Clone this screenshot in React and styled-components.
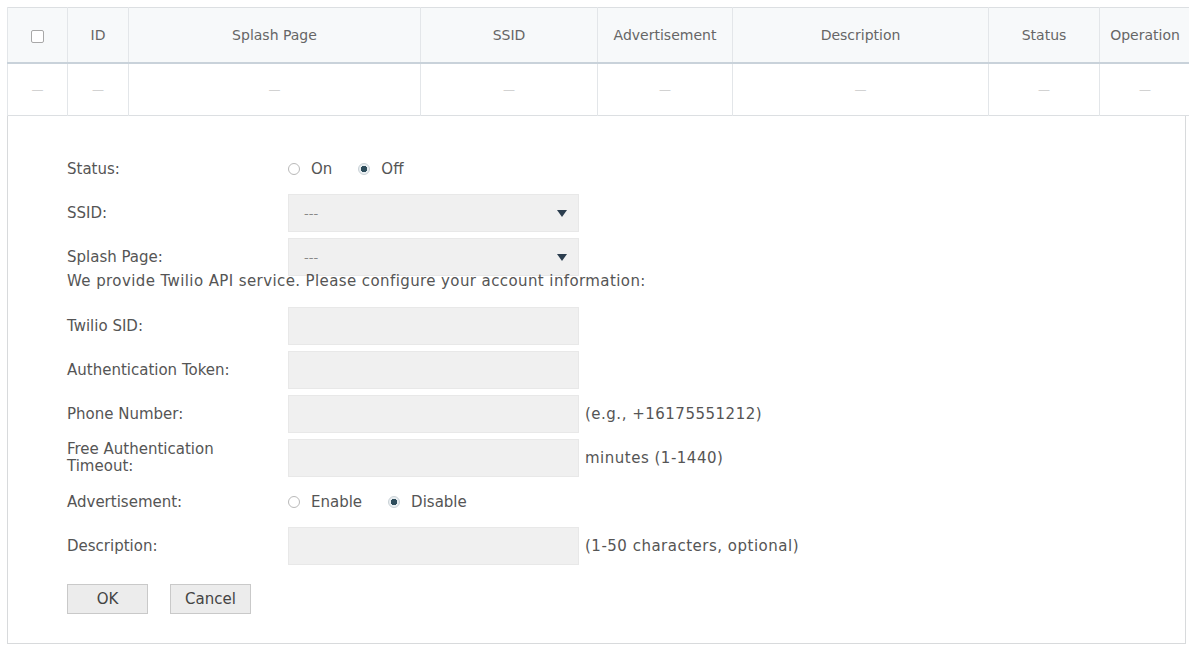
import React from 'react'
import styled, { createGlobalStyle } from 'styled-components'

const GlobalStyle = createGlobalStyle`
  html, body {
    margin: 0;
    padding: 0;
    background: #ffffff;
    overflow: hidden;
  }
  body {
    font-family: "DejaVu Sans", Verdana, sans-serif;
    font-size: 15px;
    color: #555;
  }
`

const Page = styled.div`
  padding: 7px 0 0 7px;
  width: 1189px;
  box-sizing: border-box;
`

const Grid = styled.table`
  width: 1183px;
  border-collapse: collapse;
  table-layout: fixed;
  border: 1px solid #dcdfe2;
`

const HeadCell = styled.th`
  height: 54px;
  padding: 0;
  background: #f7f9fa;
  border-left: 1px solid #e3e6e9;
  border-bottom: 2px solid #c9d2da;
  font-weight: normal;
  font-size: 14px;
  color: #666;
  text-align: center;
  white-space: nowrap;
`

const BodyCell = styled.td`
  height: 51px;
  padding: 0;
  border-left: 1px solid #e3e6e9;
  text-align: center;
  color: #d2d2d2;
  font-size: 12px;
`

const Check = styled.span`
  display: inline-block;
  width: 11px;
  height: 11px;
  border: 1px solid #a8a8a8;
  border-radius: 2px;
  background: #fff;
  vertical-align: middle;
`

const Panel = styled.div`
  width: 1179px;
  box-sizing: border-box;
  border: 1px solid #d8dadc;
  border-top: none;
  padding: 34px 0 29px 59px;
  display: flex;
  flex-direction: column;
`

const Field = styled.div`
  display: flex;
  align-items: center;
  height: 38px;
  margin-bottom: ${p => p.$after ?? 6}px;
`

const Label = styled.div`
  width: 221px;
  flex: none;
  color: #555;
  font-size: 15px;
  line-height: 17px;
`

const Note = styled.div`
  height: 16px;
  line-height: 16px;
  margin-top: -3px;
  margin-bottom: 18px;
  color: #555;
  font-size: 15px;
  letter-spacing: 0.4px;
  white-space: nowrap;
`

const Box = styled.div`
  width: 291px;
  height: 38px;
  box-sizing: border-box;
  background: #f0f0f0;
  border: 1px solid #e8e8e8;
  flex: none;
  display: flex;
  align-items: center;
  justify-content: space-between;
  padding: 0 11px 0 15px;
  color: #888;
  font-size: 13px;
`

const Caret = styled.span`
  width: 0;
  height: 0;
  border-left: 5px solid transparent;
  border-right: 5px solid transparent;
  border-top: 7px solid #2b3d4e;
`

const Hint = styled.div`
  margin-left: 6px;
  color: #555;
  font-size: 15px;
  letter-spacing: 0.5px;
`

const Radios = styled.div`
  display: flex;
  align-items: center;
  gap: 26px;
`

const Option = styled.label`
  display: flex;
  align-items: center;
  gap: 11px;
  color: #555;
  font-size: 15px;
`

const Dot = styled.span`
  width: 10px;
  height: 10px;
  border-radius: 50%;
  border: 1px solid ${p => (p.$on ? '#c9d1d6' : '#b9b9b9')};
  background: ${p => (p.$on ? 'radial-gradient(circle, #2e4d5c 0 3px, #e9eef1 3.5px)' : '#fff')};
`

const Buttons = styled.div`
  display: flex;
  gap: 22px;
`

const Button = styled.button`
  width: 81px;
  height: 30px;
  background: #ececec;
  border: 1px solid #c9c9c9;
  border-radius: 0;
  font-family: inherit;
  font-size: 15px;
  color: #444;
  padding: 0;
`

const columns = [
  { key: 'chk', w: 60 },
  { key: 'ID', w: 61 },
  { key: 'Splash Page', w: 292 },
  { key: 'SSID', w: 177 },
  { key: 'Advertisement', w: 135 },
  { key: 'Description', w: 256 },
  { key: 'Status', w: 111 },
  { key: 'Operation', w: 91 },
]

function Radio({ options, value }) {
  return (
    <Radios>
      {options.map(o => (
        <Option key={o}>
          <Dot $on={o === value} />
          {o}
        </Option>
      ))}
    </Radios>
  )
}

function App() {
  return (
    <Page>
      <GlobalStyle />
      <Grid>
        <colgroup>
          {columns.map(c => (
            <col key={c.key} style={{ width: c.w }} />
          ))}
        </colgroup>
        <thead>
          <tr>
            {columns.map(c => (
              <HeadCell key={c.key}>{c.key === 'chk' ? <Check /> : c.key}</HeadCell>
            ))}
          </tr>
        </thead>
        <tbody>
          <tr>
            {columns.map(c => (
              <BodyCell key={c.key}>—</BodyCell>
            ))}
          </tr>
        </tbody>
      </Grid>

      <Panel>
        <Field>
          <Label>Status:</Label>
          <Radio options={['On', 'Off']} value="Off" />
        </Field>
        <Field>
          <Label>SSID:</Label>
          <Box>
            ---
            <Caret />
          </Box>
        </Field>
        <Field $after={0}>
          <Label>Splash Page:</Label>
          <Box>
            ---
            <Caret />
          </Box>
        </Field>
        <Note>We provide Twilio API service. Please configure your account information:</Note>
        <Field>
          <Label>Twilio SID:</Label>
          <Box />
        </Field>
        <Field>
          <Label>Authentication Token:</Label>
          <Box />
        </Field>
        <Field>
          <Label>Phone Number:</Label>
          <Box />
          <Hint>(e.g., +16175551212)</Hint>
        </Field>
        <Field>
          <Label>
            Free Authentication
            <br />
            Timeout:
          </Label>
          <Box />
          <Hint>minutes (1-1440)</Hint>
        </Field>
        <Field>
          <Label>Advertisement:</Label>
          <Radio options={['Enable', 'Disable']} value="Disable" />
        </Field>
        <Field $after={19}>
          <Label>Description:</Label>
          <Box />
          <Hint>(1-50 characters, optional)</Hint>
        </Field>
        <Buttons>
          <Button>OK</Button>
          <Button>Cancel</Button>
        </Buttons>
      </Panel>
    </Page>
  )
}

export default App
